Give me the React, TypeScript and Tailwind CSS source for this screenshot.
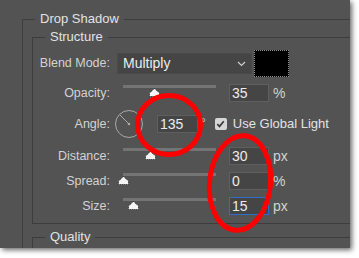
const font = { fontFamily: '"Liberation Sans", Arial, sans-serif' };

function Thumb({ left }: { left: number }) {
  return (
    <svg
      width="11"
      height="9"
      viewBox="0 0 11 9"
      className="absolute top-[4px]"
      style={{ left: left - 5.5 }}
    >
      <polygon
        points="5.5,0.5 10.5,5 10.5,8.5 0.5,8.5 0.5,5"
        fill="#f4f4f4"
        stroke="#222"
        strokeWidth="1"
        strokeDasharray="1 1"
      />
    </svg>
  );
}

function SliderRow({
  label,
  value,
  unit,
  thumb,
  focused,
  mt,
}: {
  label: string;
  value: string;
  unit: string;
  thumb: number;
  focused?: boolean;
  mt: string;
}) {
  return (
    <div className={`flex h-[18px] items-center ${mt}`}>
      <div className="w-[77px] text-right text-[12.5px] text-[#d2d2d2]">{label}</div>
      <div className="relative ml-[13px] h-full w-[93px]">
        <div className="mt-[1px] h-[3px] w-full bg-[#747474]" />
        <Thumb left={thumb} />
      </div>
      <div
        className={`ml-[13px] flex h-[18px] w-[40px] items-center border pl-[2px] text-[14px] text-[#ececec] bg-[#454545] ${
          focused ? "border-[#2d6fc0]" : "border-[#5f5f5f]"
        }`}
      >
        {value}
      </div>
      <div className="ml-[4px] text-[14px] text-[#d2d2d2]">{unit}</div>
    </div>
  );
}

export default function App() {
  return (
    <div className="h-[258px] w-[359px] bg-white" style={font}>
      <div className="relative h-[248px] w-[350px] overflow-hidden bg-[#535353] shadow-[2px_2px_5px_rgba(0,0,0,0.6)]">
        <div className="pl-[22px] pt-[11px]">
          {/* Drop Shadow */}
          <fieldset className="w-[400px] border-l border-t border-[#3d3d3d]">
            <legend className="ml-[12px] px-[5px] text-[13px] leading-4 text-[#e2e2e2]">
              Drop Shadow
            </legend>

            {/* Structure */}
            <fieldset className="ml-[9px] mt-[2px] border-b border-l border-t border-[#3d3d3d] pb-[8px]">
              <legend className="ml-[12px] px-[5px] text-[13px] leading-4 text-[#e2e2e2]">
                Structure
              </legend>

              <div className="mt-[5px] flex h-[27px] items-center">
                <div className="w-[77px] text-right text-[12.5px] text-[#d2d2d2]">Blend Mode:</div>
                <div className="ml-[7px] flex h-[21px] w-[135px] items-center justify-between border border-[#4a4a4a] bg-[#454545] pl-[5px] pr-[5px] text-[14px] text-[#ececec]">
                  <span>Multiply</span>
                  <svg width="9" height="6" viewBox="0 0 9 6">
                    <path d="M1 1 L4.5 4.5 L8 1" fill="none" stroke="#cfcfcf" strokeWidth="1.2" />
                  </svg>
                </div>
                <div className="ml-[2px] h-[27px] w-[35px] border border-dotted border-[#8a8a8a] bg-black" />
              </div>

              <SliderRow label="Opacity:" value="35" unit="%" thumb={31} mt="mt-[7px]" />

              <div className="mt-[8px] flex h-[28px] items-center">
                <div className="w-[77px] text-right text-[12.5px] text-[#d2d2d2]">Angle:</div>
                <svg width="28" height="28" viewBox="0 0 28 28" className="ml-[5px]">
                  <circle cx="14" cy="14" r="13.5" fill="none" stroke="#a8a8a8" strokeWidth="1" />
                  <line x1="14" y1="14" x2="4.8" y2="4.8" stroke="#a8a8a8" strokeWidth="1" />
                  <circle cx="14" cy="14" r="1.3" fill="#a8a8a8" />
                </svg>
                <div className="ml-[14px] flex h-[18px] w-[41px] items-center border border-[#5f5f5f] bg-[#454545] pl-[2px] text-[14px] text-[#ececec]">
                  135
                </div>
                <div className="ml-[3px] self-start pt-[4px] text-[12px] text-[#d2d2d2]">°</div>
                <div className="ml-[9px] flex h-[12px] w-[12px] items-center justify-center rounded-[2px] bg-[#d6d6d6]">
                  <svg width="9" height="8" viewBox="0 0 9 8">
                    <path d="M1.3 4.2 L3.5 6.4 L7.8 1.3" fill="none" stroke="#3a3a3a" strokeWidth="1.7" />
                  </svg>
                </div>
                <div className="ml-[6px] text-[13px] text-[#e2e2e2]">Use Global Light</div>
              </div>

              <SliderRow label="Distance:" value="30" unit="px" thumb={27} mt="mt-[9px]" />
              <SliderRow label="Spread:" value="0" unit="%" thumb={0} mt="mt-[7px]" />
              <SliderRow label="Size:" value="15" unit="px" thumb={10} focused mt="mt-[7px]" />
            </fieldset>

            {/* Quality */}
            <fieldset className="ml-[9px] mt-[5px] h-[40px] border-l border-t border-[#3d3d3d]">
              <legend className="ml-[12px] px-[5px] text-[13px] leading-4 text-[#e2e2e2]">
                Quality
              </legend>
            </fieldset>
          </fieldset>
        </div>

        {/* red annotations */}
        <svg width="350" height="248" className="pointer-events-none absolute left-0 top-0">
          <ellipse cx="169" cy="125" rx="31.5" ry="29.5" fill="none" stroke="#ff0000" strokeWidth="5" />
          <ellipse
            cx="240"
            cy="183"
            rx="30.5"
            ry="47.5"
            fill="none"
            stroke="#ff0000"
            strokeWidth="5"
            transform="rotate(6 240 183)"
          />
        </svg>
      </div>
    </div>
  );
}
